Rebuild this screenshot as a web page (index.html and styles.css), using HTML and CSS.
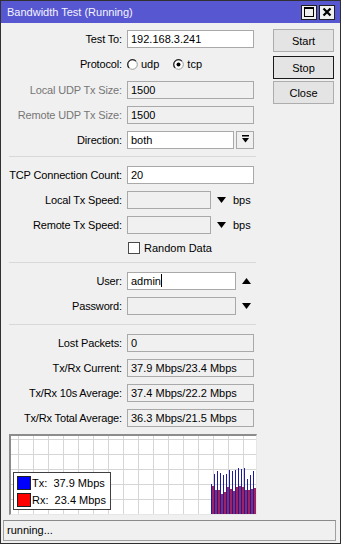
FILE: index.html
```html
<!DOCTYPE html>
<html>
<head>
<meta charset="utf-8">
<link rel="stylesheet" href="styles.css">
</head>
<body>
<div class="window">
  <div class="titlebar">
    <span class="title">Bandwidth Test (Running)</span>
    <div class="tbtns">
      <span class="tb"><svg width="10" height="10" viewBox="0 0 10 10"><rect x="0.5" y="0.5" width="9" height="9" fill="none" stroke="#000" stroke-width="1"/><rect x="0" y="0" width="10" height="2" fill="#000"/></svg></span>
      <span class="tb"><svg width="10" height="10" viewBox="0 0 10 10"><path d="M1.5 1.5 L8.5 8.5 M8.5 1.5 L1.5 8.5" stroke="#000" stroke-width="2.2"/></svg></span>
    </div>
  </div>
  <div class="content">
    <div class="form">
      <div class="row"><span class="lbl">Test To:</span><span class="fld">192.168.3.241</span></div>
      <div class="row proto"><span class="lbl">Protocol:</span>
        <span class="radio"><svg width="11" height="11" viewBox="0 0 11 11"><circle cx="5.5" cy="5.5" r="4.8" fill="#fff" stroke="#9a9a9a"/><path d="M2.1 8.9 A4.8 4.8 0 0 1 8.9 2.1" fill="none" stroke="#222" stroke-width="1.2"/></svg>udp</span>
        <span class="radio"><svg width="11" height="11" viewBox="0 0 11 11"><circle cx="5.5" cy="5.5" r="4.8" fill="#fff" stroke="#9a9a9a"/><path d="M2.1 8.9 A4.8 4.8 0 0 1 8.9 2.1" fill="none" stroke="#222" stroke-width="1.2"/><circle cx="5.5" cy="5.5" r="2" fill="#000"/></svg>tcp</span>
      </div>
      <div class="row"><span class="lbl dis">Local UDP Tx Size:</span><span class="fld ro">1500</span></div>
      <div class="row"><span class="lbl dis">Remote UDP Tx Size:</span><span class="fld ro">1500</span></div>
      <div class="row"><span class="lbl">Direction:</span><span class="fld short">both</span><span class="ddbtn"><svg width="9" height="9" viewBox="0 0 9 9"><rect x="1" y="0" width="7" height="1.5" fill="#000"/><path d="M1 3 H8 L4.5 7.5 Z" fill="#000"/></svg></span></div>
      <div class="sep"></div>
      <div class="row"><span class="lbl">TCP Connection Count:</span><span class="fld">20</span></div>
      <div class="row"><span class="lbl">Local Tx Speed:</span><span class="fld ro spd"></span><span class="tri"><svg width="9" height="6" viewBox="0 0 9 6"><path d="M0 0 H9 L4.5 6 Z" fill="#000"/></svg></span><span class="unit">bps</span></div>
      <div class="row"><span class="lbl">Remote Tx Speed:</span><span class="fld ro spd"></span><span class="tri"><svg width="9" height="6" viewBox="0 0 9 6"><path d="M0 0 H9 L4.5 6 Z" fill="#000"/></svg></span><span class="unit">bps</span></div>
      <div class="row chkrow"><span class="lbl"></span><span class="check"></span><span class="chktxt">Random Data</span></div>
      <div class="sep"></div>
      <div class="row"><span class="lbl">User:</span><span class="fld user">admin<span class="caret"></span></span><span class="tri up"><svg width="9" height="6" viewBox="0 0 9 6"><path d="M0 6 H9 L4.5 0 Z" fill="#000"/></svg></span></div>
      <div class="row"><span class="lbl">Password:</span><span class="fld ro user"></span><span class="tri up"><svg width="9" height="6" viewBox="0 0 9 6"><path d="M0 0 H9 L4.5 6 Z" fill="#000"/></svg></span></div>
      <div class="sep last"></div>
      <div class="row"><span class="lbl">Lost Packets:</span><span class="fld ro">0</span></div>
      <div class="row"><span class="lbl">Tx/Rx Current:</span><span class="fld ro">37.9 Mbps/23.4 Mbps</span></div>
      <div class="row"><span class="lbl">Tx/Rx 10s Average:</span><span class="fld ro">37.4 Mbps/22.2 Mbps</span></div>
      <div class="row"><span class="lbl">Tx/Rx Total Average:</span><span class="fld ro">36.3 Mbps/21.5 Mbps</span></div>
      <div class="graph">
        <svg width="245" height="78" viewBox="0 0 245 78">
          <rect width="245" height="78" fill="#fff"/>
          <g stroke="#d6d6d6" stroke-width="1">
            <path d="M7.5 0V78M22.5 0V78M37.5 0V78M52.5 0V78M67.5 0V78M82.5 0V78M97.5 0V78M112.5 0V78M127.5 0V78M142.5 0V78M157.5 0V78M172.5 0V78M187.5 0V78M202.5 0V78M217.5 0V78M232.5 0V78"/>
            <path d="M0 3.5H245M0 18.5H245M0 33.5H245M0 48.5H245M0 63.5H245"/>
          </g>
          <g fill="#1c1c9c">
            <rect x="200" y="48" width="1" height="30"/>
            <rect x="203" y="38" width="1" height="40"/>
            <rect x="206" y="35" width="1" height="43"/>
            <rect x="209" y="37" width="1" height="41"/>
            <rect x="212" y="39" width="1" height="39"/>
            <rect x="215" y="38" width="1" height="40"/>
            <rect x="218" y="34" width="1" height="44"/>
            <rect x="221" y="35" width="1" height="43"/>
            <rect x="224" y="34" width="1" height="44"/>
            <rect x="227" y="32" width="1" height="46"/>
            <rect x="230" y="33" width="1" height="45"/>
            <rect x="233" y="32" width="1" height="46"/>
            <rect x="236" y="43" width="1" height="35"/>
            <rect x="239" y="39" width="1" height="39"/>
            <rect x="242" y="35" width="1" height="43"/>
          </g>
          <g fill="#9a2466">
            <rect x="201" y="50" width="2" height="28"/>
            <rect x="204" y="54" width="2" height="24"/>
            <rect x="207" y="54" width="2" height="24"/>
            <rect x="210" y="58" width="2" height="20"/>
            <rect x="213" y="56" width="2" height="22"/>
            <rect x="216" y="51" width="2" height="27"/>
            <rect x="219" y="53" width="2" height="25"/>
            <rect x="222" y="55" width="2" height="23"/>
            <rect x="225" y="51" width="2" height="27"/>
            <rect x="228" y="50" width="2" height="28"/>
            <rect x="231" y="51" width="2" height="27"/>
            <rect x="234" y="54" width="2" height="24"/>
            <rect x="237" y="54" width="2" height="24"/>
            <rect x="240" y="53" width="2" height="25"/>
            <rect x="243" y="52" width="2" height="26"/>
          </g>
        </svg>
        <div class="legend">
          <div class="lg"><span class="sw tx"></span><span>Tx:&nbsp;&nbsp;37.9 Mbps</span></div>
          <div class="lg"><span class="sw rx"></span><span>Rx:&nbsp;&nbsp;23.4 Mbps</span></div>
        </div>
      </div>
    </div>
    <div class="side">
      <span class="btn">Start</span>
      <span class="btn def">Stop</span>
      <span class="btn">Close</span>
    </div>
  </div>
  <div class="status">running...</div>
</div>
</body>
</html>
```
FILE: styles.css
```css
html, body {
  margin: 0;
  padding: 0;
  background: #ffffff;
}
body {
  font-family: "Liberation Sans", Arial, sans-serif;
  font-size: 11px;
  color: #000;
}
.window {
  width: 339px;
  height: 542px;
  border: 1px solid #303030;
  background: #f0f0f0;
  display: flex;
  flex-direction: column;
  box-sizing: content-box;
}
.titlebar {
  height: 22px;
  background: #5757d1;
  display: flex;
  align-items: center;
  justify-content: space-between;
  padding: 0 5px 0 6px;
  flex: none;
}
.title {
  color: #f4f4ff;
  font-size: 11px;
}
.tbtns {
  display: flex;
  gap: 2px;
}
.tb {
  width: 14px;
  height: 13px;
  background: #f0f0f0;
  border: 1px solid #202020;
  display: flex;
  align-items: center;
  justify-content: center;
}
.content {
  display: flex;
  flex: 1;
  padding-top: 3px;
}
.form {
  width: 256px;
  flex: none;
}
.row {
  display: flex;
  align-items: center;
  height: 25px;
}
.proto {
  height: 26px;
}
.chkrow {
  height: 21px;
}
.lbl {
  width: 121px;
  margin-right: 5px;
  text-align: right;
  flex: none;
  white-space: nowrap;
  letter-spacing: -0.15px;
}
.lbl.dis {
  color: #767676;
}
.fld {
  box-sizing: border-box;
  width: 127px;
  height: 18px;
  border: 1px solid #a9a9a9;
  background: #fff;
  padding-left: 3px;
  line-height: 16px;
  white-space: nowrap;
  display: block;
}
.fld.ro {
  background: #f0f0f0;
}
.fld.short {
  width: 107px;
}
.fld.spd {
  width: 84px;
}
.fld.user {
  width: 109px;
}
.caret {
  display: inline-block;
  width: 1px;
  height: 13px;
  background: #000;
  vertical-align: -2px;
}
.ddbtn {
  box-sizing: border-box;
  width: 18px;
  height: 18px;
  margin-left: 2px;
  border: 1px solid #a9a9a9;
  background: #f0f0f0;
  display: flex;
  align-items: center;
  justify-content: center;
}
.tri {
  display: flex;
  width: 9px;
  margin-left: 6px;
}
.tri.up {
  margin-left: 6px;
}
.unit {
  margin-left: 7px;
}
.radio {
  display: flex;
  align-items: center;
  gap: 3px;
  margin-right: 14px;
}
.check {
  box-sizing: border-box;
  width: 12px;
  height: 12px;
  border: 1px solid #4a4a4a;
  background: #fff;
  margin-left: 1px;
}
.chktxt {
  margin-left: 4px;
}
.sep {
  height: 1px;
  background: #d8d8d8;
  margin: 4px 1px 5px 8px;
}
.sep.last {
  margin-top: 6px;
}
.graph {
  position: relative;
  margin: 4px 0 0 8px;
  width: 245px;
  height: 78px;
  border-top: 2px solid #8c8c8c;
  border-left: 2px solid #8c8c8c;
  border-right: 1px solid #e6e6e6;
  border-bottom: 1px solid #e6e6e6;
}
.graph svg {
  display: block;
}
.legend {
  position: absolute;
  left: 2px;
  top: 36px;
  width: 98px;
  height: 38px;
  border: 1px solid #404040;
  background: #fff;
  display: flex;
  flex-direction: column;
  justify-content: center;
  gap: 3px;
  padding-left: 3px;
  box-sizing: border-box;
  font-size: 11px;
}
.lg {
  display: flex;
  align-items: center;
  gap: 1px;
}
.sw {
  width: 14px;
  height: 14px;
  box-sizing: border-box;
  border: 1px solid #202020;
}
.sw.tx {
  background: #0000ff;
}
.sw.rx {
  background: #ff0000;
}
.side {
  display: flex;
  flex-direction: column;
  margin-left: 16px;
  padding-top: 3px;
}
.btn {
  box-sizing: border-box;
  width: 61px;
  height: 23px;
  border: 1px solid #adadad;
  background: #e4e4e4;
  display: flex;
  align-items: center;
  justify-content: center;
  margin-bottom: 2px;
}
.btn:first-child {
  margin-bottom: 4px;
}
.btn.def {
  border: 1px solid #1a1a1a;
}
.status {
  margin: 0 4px 2px 2px;
  height: 21px;
  box-sizing: border-box;
  border: 1px solid #a0a0a0;
  border-top-color: #8a8a8a;
  padding-left: 3px;
  line-height: 19px;
  flex: none;
}
```
